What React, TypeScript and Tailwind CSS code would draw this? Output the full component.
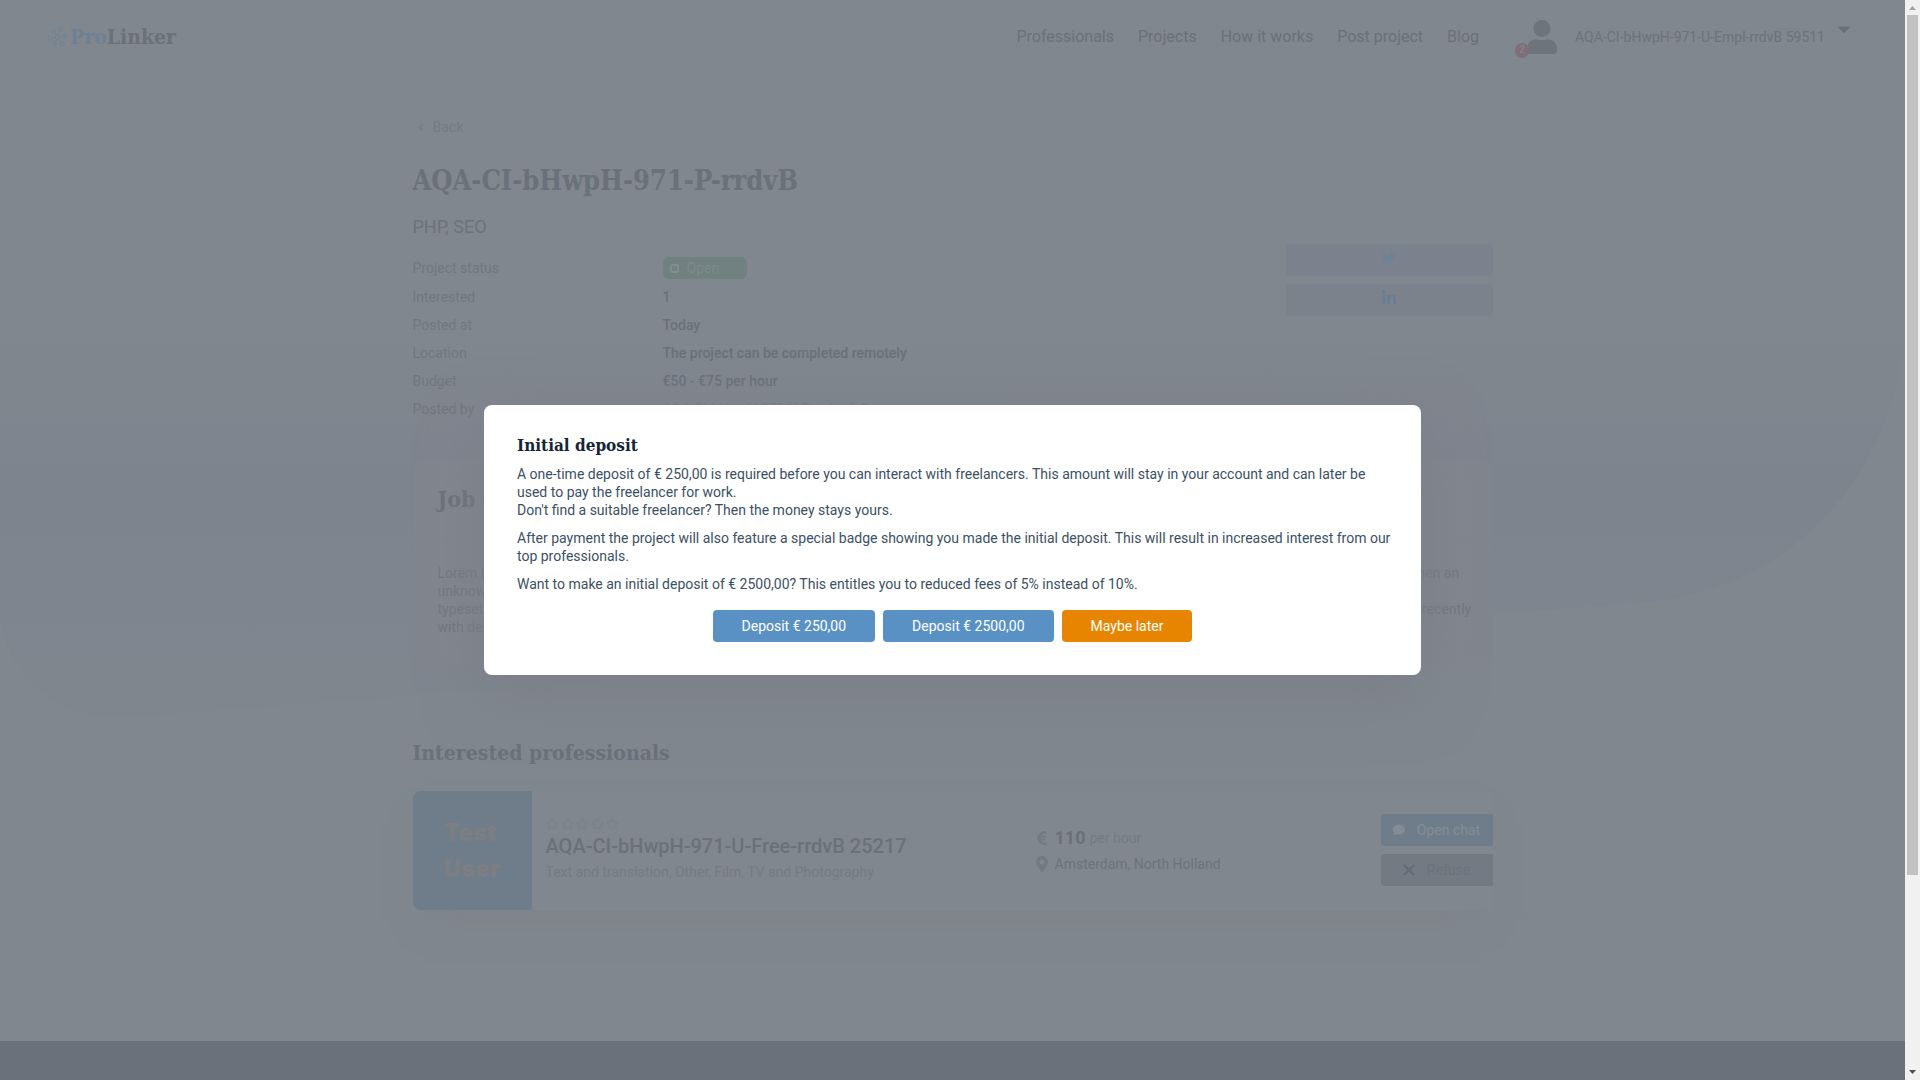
import React from "react";
import { FaUser, FaCaretDown, FaTwitter, FaLinkedinIn, FaComment, FaEuroSign, FaMapMarkerAlt, FaRegStar, FaChevronLeft } from "react-icons/fa";

const slab = "font-['Roboto_Slab','DejaVu_Serif_Condensed','DejaVu_Serif',serif] font-bold";

function Logo() {
  const nodes = [
    [14, 3, 2],
    [6.5, 5.5, 1.6],
    [3, 12, 2.2],
    [7.5, 17.5, 1.8],
    [15, 18, 2],
    [17, 10.2, 1.8],
  ];
  return (
    <a href="#home" className="flex items-center gap-[3px]">
      <svg viewBox="0 0 20 21" className="h-[21px] w-5" fill="none" stroke="#6f8397" strokeWidth="1">
        <circle cx="10.5" cy="11" r="2.4" />
        {nodes.map(([x, y, r]) => (
          <circle key={x + "-" + y} cx={x} cy={y} r={r} />
        ))}
        <path d="M11.500 9 13.300 5M9 9.300 7.600 6.900M8 11.300 5.200 11.800M9.600 13.200 8.300 15.900M12 13 14 16.300M12.900 10.800 15.200 10.400" />
      </svg>
      <span className={`${slab} text-[21px] leading-7 text-[#6a717b]`}>
        <span className="text-[#6e8093]">Pro</span>Linker
      </span>
    </a>
  );
}

function Header() {
  const links = ["Professionals", "Projects", "How it works", "Post project", "Blog"];
  return (
    <header className="flex h-[75px] items-center justify-between border-b border-[#7e858c] pr-[54px] pb-px pl-[47px]">
      <Logo />
      <div className="flex items-center">
        <nav className="flex gap-6 text-base text-[#6a717b]">
          {links.map((l) => (
            <a key={l} href={"#" + l}>{l}</a>
          ))}
        </nav>
        <button type="button" className="ml-8 flex items-center text-sm text-[#6c737c]">
          <span className="relative mr-0.5 flex h-16 w-[62px] items-center justify-center rounded-full">
            <FaUser className="h-[34px] w-[30px] text-[#6d747b]" />
            <span className="absolute top-[38px] left-1 flex h-[15px] w-[14px] items-center justify-center rounded-full bg-[#7f6e77] text-[10px] text-[#848b92]">2</span>
          </span>
          AQA-CI-bHwpH-971-U-Empl-rrdvB 59511
          <FaCaretDown className="mb-4 ml-3 h-5 w-[14px] text-[#6a717b]" />
        </button>
      </div>
    </header>
  );
}

const facts = [
  ["Interested", "1"],
  ["Posted at", "Today"],
  ["Location", "The project can be completed remotely"],
  ["Budget", "€50 - €75 per hour"],
];

function Project() {
  return (
    <section>
      <a href="#back" className="flex items-center gap-2 pl-1 text-sm leading-5 text-[#757b86]">
        <FaChevronLeft className="h-2 w-2" />
        Back
      </a>
      <h1 className={`${slab} mt-6 text-[27px] leading-10 text-[#6a717b]`}>AQA-CI-bHwpH-971-P-rrdvB</h1>
      <p className="mt-[14px] text-lg leading-6 text-[#6c737c]">PHP, SEO</p>
      <div className="flex items-start justify-between">
        <dl className="mt-[18px] grid grid-cols-[250px_1fr] gap-y-2 text-sm leading-5 text-[#70777f]">
          <dt className="leading-[22px]">Project status</dt>
          <dd>
            <span className="flex h-[22px] w-[84px] items-center gap-2 rounded-md bg-[#71817f] pl-[7px] text-[#7d8a8d]">
              <span className="h-[9px] w-[9px] rounded-[3px] border-2 border-[#838b91]" />
              Open
            </span>
          </dd>
          {facts.map(([k, v]) => (
            <React.Fragment key={k}>
              <dt>{k}</dt>
              <dd className="font-medium text-[#6a717b]">{v}</dd>
            </React.Fragment>
          ))}
          <dt>Posted by</dt>
          <dd><a href="#employer" className="text-[#747b85]">AQA-CI-bHwpH-971-U-Empl-rrdvB</a></dd>
        </dl>
        <div className="mt-[5px] flex w-[207px] flex-col gap-2">
          <button type="button" aria-label="Share on Twitter" className="flex h-8 items-center justify-center rounded-sm bg-[#7c828d] pb-1">
            <FaTwitter className="h-[14px] w-[14px] text-[#6d8294]" />
          </button>
          <button type="button" aria-label="Share on LinkedIn" className="flex h-8 items-center justify-center rounded-sm bg-[#7b828b] pb-1">
            <FaLinkedinIn className="h-4 w-4 text-[#6b7d90]" />
          </button>
        </div>
      </div>
    </section>
  );
}

function Description() {
  return (
    <section className="mt-[41px] rounded-lg border border-[#7f868d] bg-[#80868e]">
      <h2 className={`${slab} border-b border-[#7e848c] px-6 pt-5 pb-6 text-[23px] leading-9 text-[#6a717b]`}>Job description</h2>
      <p className="pt-[22px] pr-4 pb-[26px] pl-6 text-sm leading-[18px] text-[#70777f]">
        Lorem Ipsum is simply dummy text of the printing and typesetting industry. Lorem Ipsum has been the industry's standard dummy text ever since the 1500s, when an unknown printer took a galley of type and scrambled it to make a type specimen book. It has survived not only five centuries, but also the leap into electronic typesetting, remaining essentially unchanged. It was popularised in the 1960s with the release of Letraset sheets containing Lorem Ipsum passages, and more recently with desktop publishing software like Aldus PageMaker including versions of Lorem Ipsum.
      </p>
    </section>
  );
}

function Professionals() {
  return (
    <section className="mt-[72px]">
      <h2 className={`${slab} text-[21px] leading-9 text-[#6a717b]`}>Interested professionals</h2>
      <article className="mt-5 flex items-stretch rounded-lg shadow-[0_20px_30px_-12px_#7d838a]">
        <div className="flex h-[119px] w-[119px] shrink-0 items-center justify-center rounded-l-lg bg-[#6f7d8a] font-['Inter',sans-serif] text-2xl leading-9 font-black text-[#7d7e82]">
          <span>Test<br />User</span>
        </div>
        <div className="flex flex-1 flex-col pt-[27px] pl-[14px]">
          <div className="flex gap-[2px] text-[#7b828d]">
            {[1, 2, 3, 4, 5].map((n) => <FaRegStar key={n} className="h-3 w-[13px]" />)}
          </div>
          <h3 className="mt-1 text-xl leading-6 font-medium text-[#6a717b]">AQA-CI-bHwpH-971-U-Free-rrdvB 25217</h3>
          <p className="mt-1 text-sm leading-5 text-[#747b85]">Text and translation, Other, Film, TV and Photography</p>
        </div>
        <div className="flex w-[345px] flex-col gap-1 pt-[35px] text-sm text-[#6c737c]">
          <p className="flex items-center gap-[7px] leading-6">
            <FaEuroSign className="h-4 w-3 text-[#737a82]" />
            <span className="flex items-center gap-1">
              <strong className="text-lg leading-6 font-bold text-[#6a717b]">110</strong>
              <span className="text-[#747b85]">per hour</span>
            </span>
          </p>
          <p className="flex items-center gap-[7px] leading-5">
            <FaMapMarkerAlt className="h-4 w-3 text-[#737a82]" />
            Amsterdam, North Holland
          </p>
        </div>
        <div className="flex w-28 flex-col gap-2 pt-[23px] text-sm">
          <button type="button" className="flex h-8 items-center justify-center gap-3 rounded-l-sm bg-[#6f7d8a] text-[#838c94]">
            <FaComment className="h-3 w-3" />Open chat
          </button>
          <button type="button" className="flex h-8 items-center justify-center gap-3 rounded-l-sm bg-[#737a83] text-[#6b727a]">
            <svg viewBox="0 0 12 12" className="h-3 w-3" stroke="#646b73" strokeWidth="2"><path d="M1 1 11 11M11 1 1 11" /></svg>
            Refuse
          </button>
        </div>
      </article>
    </section>
  );
}

function DepositDialog() {
  return (
    <div className="absolute inset-0 flex items-center justify-center">
      <div role="dialog" aria-labelledby="deposit-title" className="w-full max-w-[937px] rounded-lg bg-white pt-[26px] pr-6 pb-[33px] pl-[33px] text-sm leading-[18px] text-[#3c5064] shadow-[0_20px_60px_#7b7f88]">
        <h2 id="deposit-title" className={`${slab} text-[17px] leading-7 text-[#152536]`}>Initial deposit</h2>
        <p className="mt-[6px]">
          A one-time deposit of € 250,00 is required before you can interact with freelancers. This amount will stay in your account and can later be used to pay the freelancer for work.
          <br />
          Don't find a suitable freelancer? Then the money stays yours.
        </p>
        <p className="mt-[10px]">After payment the project will also feature a special badge showing you made the initial deposit. This will result in increased interest from our top professionals.</p>
        <p className="mt-[10px]">Want to make an initial deposit of € 2500,00? This entitles you to reduced fees of 5% instead of 10%.</p>
        <div className="mt-[17px] mr-[9px] flex justify-center gap-2 text-white">
          <button type="button" className="h-8 rounded-sm bg-[#5991c4] px-[29px]">Deposit € 250,00</button>
          <button type="button" className="h-8 rounded-sm bg-[#5991c4] px-[29px]">Deposit € 2500,00</button>
          <button type="button" className="h-8 rounded-sm bg-[#e88500] px-[29px]">Maybe later</button>
        </div>
      </div>
    </div>
  );
}

function HeroShape() {
  return (
    <svg aria-hidden="true" viewBox="0 0 1905 720" preserveAspectRatio="none" className="absolute inset-x-0 top-0 h-[720px] w-full">
      <defs>
        <linearGradient id="hero" x1="0" y1="0" x2="0" y2="1">
          <stop offset="0.45" stopColor="#80878e" />
          <stop offset="0.68" stopColor="#7e848e" />
          <stop offset="0.86" stopColor="#7e858e" />
          <stop offset="1" stopColor="#7f868e" />
        </linearGradient>
      </defs>
      <path d="M0 0H1905V340C1890 470 1800 590 1640 603L130 717C60 722 10 680 0 620Z" fill="url(#hero)" />
    </svg>
  );
}

function Scrollbar() {
  return (
    <aside aria-hidden="true" className="flex w-[15px] shrink-0 flex-col items-center bg-[#f1f1f1]">
      <svg viewBox="0 0 15 15" className="h-[15px] w-[15px]"><path d="M4 10h7L7.500 6z" fill="#a3a3a3" /></svg>
      <div className="w-[11px] grow-[860] bg-[#c1c1c1]" />
      <div className="grow-[190]" />
      <svg viewBox="0 0 15 15" className="h-[15px] w-[15px]"><path d="M4 5h7L7.500 9z" fill="#505050" /></svg>
    </aside>
  );
}

export default function App() {
  return (
    <div className="flex min-h-screen font-['Roboto',sans-serif]">
      <div className="relative flex flex-1 flex-col bg-[#80878e]">
        <HeroShape />
        <div className="relative flex flex-1 flex-col">
          <Header />
          <main className="mx-auto w-full max-w-[1080px] flex-1 pt-[42px]">
            <Project />
            <Description />
            <Professionals />
          </main>
          <footer className="h-[39px] bg-[#6a717b]" />
        </div>
        <DepositDialog />
      </div>
      <Scrollbar />
    </div>
  );
}
